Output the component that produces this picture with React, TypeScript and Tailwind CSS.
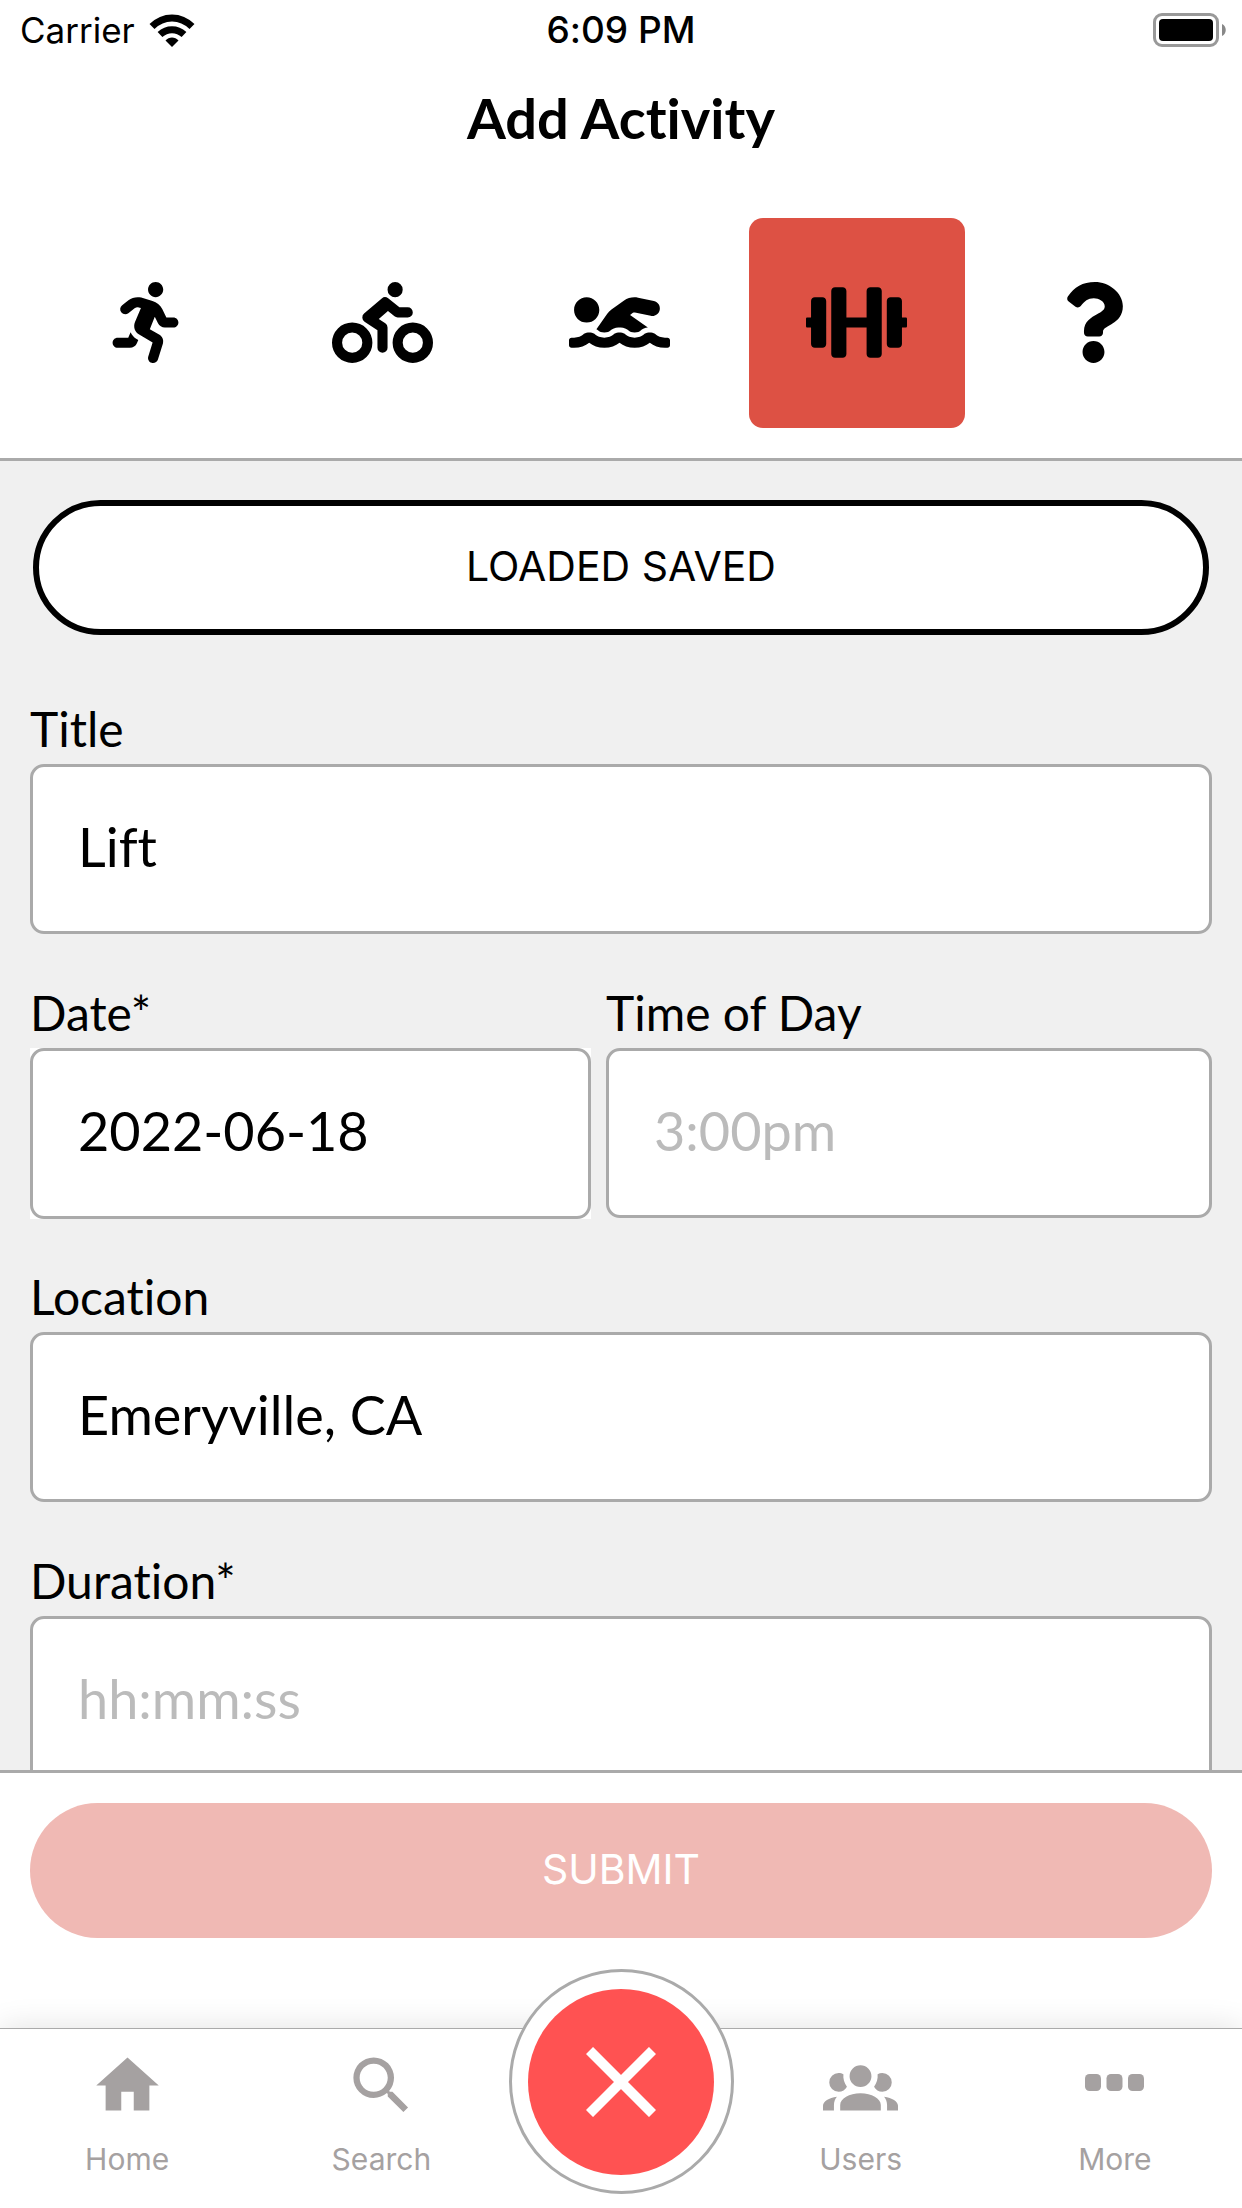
import type { ReactNode } from "react";
import { FaRunning, FaBiking, FaSwimmer, FaDumbbell, FaQuestion } from "react-icons/fa";
import { MdHome, MdSearch } from "react-icons/md";

function WifiIcon() {
  return (
    <svg viewBox="0 0 46 33" className="h-[33px] w-[46px]" aria-hidden="true">
      <g fill="none" stroke="#000" strokeWidth="7">
        <path d="M3 12.500C14.500 1 31.500 1 43 12.500" />
        <path d="M11 20.500C18 14 28 14 35 20.500" />
      </g>
      <path d="M16.500 26.500C20 22.500 26 22.500 29.500 26.500L23 33Z" />
    </svg>
  );
}

function BatteryIcon() {
  return (
    <svg viewBox="0 0 73 34" className="h-[34px] w-[73px]" aria-hidden="true">
      <rect x="1.500" y="1.500" width="63" height="31" rx="7.500" fill="none" stroke="#999" strokeWidth="3" />
      <rect x="6" y="6" width="54" height="22" rx="4" />
      <path d="M69 11C74 13 74 21 69 23Z" fill="#888" />
    </svg>
  );
}

function GroupIcon() {
  return (
    <svg viewBox="0 0 24 24" className="size-[75px]" fill="currentColor" aria-hidden="true">
      <path d="M12,5.5A3.5,3.5 0 0,1 15.5,9A3.5,3.5 0 0,1 12,12.5A3.5,3.5 0 0,1 8.5,9A3.5,3.5 0 0,1 12,5.5M5,8C5.56,8 6.08,8.15 6.53,8.42C6.38,9.85 6.8,11.27 7.66,12.38C7.16,13.34 6.16,14 5,14A3,3 0 0,1 2,11A3,3 0 0,1 5,8M19,8A3,3 0 0,1 22,11A3,3 0 0,1 19,14C17.84,14 16.84,13.34 16.34,12.38C17.2,11.27 17.62,9.85 17.47,8.42C17.92,8.15 18.44,8 19,8M5.5,18.25C5.5,16.18 8.41,14.5 12,14.5C15.59,14.5 18.5,16.18 18.5,18.25V20H5.5V18.25M0,20V18.5C0,17.11 1.89,15.94 4.45,15.6C3.86,16.28 3.5,17.22 3.5,18.25V20H0M24,20H20.5V18.25C20.5,17.22 20.14,16.28 19.55,15.6C22.11,15.94 24,17.11 24,18.5V20Z" />
    </svg>
  );
}

function MoreIcon() {
  return (
    <svg viewBox="0 0 75 75" className="size-[75px]" fill="currentColor" aria-hidden="true">
      <rect x="8" y="26" width="16" height="17" rx="4.500" />
      <rect x="29.500" y="26" width="16" height="17" rx="4.500" />
      <rect x="51" y="26" width="16" height="17" rx="4.500" />
    </svg>
  );
}

const activities = [
  { name: "Run", icon: FaRunning, active: false },
  { name: "Bike", icon: FaBiking, active: false },
  { name: "Swim", icon: FaSwimmer, active: false },
  { name: "Lift", icon: FaDumbbell, active: true },
  { name: "Other", icon: FaQuestion, active: false },
];

type FieldProps = {
  id: string;
  label: string;
  value?: string;
  placeholder?: string;
  className?: string;
  boxClassName?: string;
};

function Field({ id, label, value, placeholder, className = "", boxClassName = "h-[170px]" }: FieldProps) {
  return (
    <div className={`flex min-w-0 flex-col ${className}`}>
      <label htmlFor={id} className="h-[68px] text-[48px] leading-[66px]">
        {label}
      </label>
      <div className={boxClassName}>
        <input
          id={id}
          type="text"
          defaultValue={value}
          placeholder={placeholder}
          className="block h-full w-full rounded-[14px] border-3 border-[#aaa] bg-white px-[45px] pb-1.5 text-[54px] text-black outline-none placeholder:text-[#bbb]"
        />
      </div>
    </div>
  );
}

function Tab({ label, children }: { label: string; children: ReactNode }) {
  return (
    <a href="#" className="flex flex-1 flex-col items-center pt-[19px] text-[#a5a1a1]">
      {children}
      <span className="mt-[18px] font-[Inter,sans-serif] text-[30px] leading-[36px]">{label}</span>
    </a>
  );
}

export default function App() {
  return (
    <div className="flex h-screen flex-col overflow-hidden bg-white font-[Lato,sans-serif] text-black [font-variant-ligatures:none]">
      <header className="border-b-3 border-[#aaa]">
        <div className="grid h-[60px] grid-cols-3 items-center pr-4 pl-5 font-[Inter,sans-serif]">
          <div className="flex items-center gap-3.5 text-[35px]">
            <span>Carrier</span>
            <WifiIcon />
          </div>
          <span className="pr-1 text-center text-[37px] font-medium">6:09 PM</span>
          <div className="flex justify-end">
            <BatteryIcon />
          </div>
        </div>
        <h1 className="h-[158px] pt-[22px] text-center text-[56px] leading-[72px] font-bold">Add Activity</h1>
        <div className="grid grid-cols-5 gap-[21px] pr-10 pb-[30px] pl-[38px]">
          {activities.map(({ name, icon: Icon, active }) => (
            <button
              key={name}
              type="button"
              aria-label={name}
              aria-pressed={active}
              className={`flex h-[210px] items-center justify-center rounded-[14px] pr-0.5 pb-0.5 ${active ? "bg-[#dd5144]" : "bg-white"}`}
            >
              <Icon className="h-[81px] w-[101px]" />
            </button>
          ))}
        </div>
      </header>

      <main className="min-h-0 flex-1 overflow-hidden bg-[#f0f0f0] px-[30px] pt-[39px]">
        <div className="px-[3px]">
          <button
            type="button"
            className="h-[135px] w-full rounded-full border-6 border-black bg-white pb-0.5 font-[Inter,sans-serif] text-[41px]"
          >
            LOADED SAVED
          </button>
        </div>
        <form className="flex flex-col gap-[46px] pt-[61px]">
          <Field id="title" label="Title" value="Lift" />
          <div className="-mb-px flex gap-[15px]">
            <Field id="date" label="Date*" value="2022-06-18" className="w-[561px]" boxClassName="h-[171px] bg-white" />
            <Field id="time" label="Time of Day" placeholder="3:00pm" className="flex-1" />
          </div>
          <Field id="location" label="Location" value="Emeryville, CA" />
          <Field id="duration" label="Duration*" placeholder="hh:mm:ss" />
        </form>
      </main>

      <div className="border-t-3 border-[#aaa] bg-white px-[30px] pt-[30px] pb-[90px]">
        <button
          type="button"
          className="h-[135px] w-full rounded-full bg-[#f0b9b4] pb-0.5 font-[Inter,sans-serif] text-[41px] text-white"
        >
          SUBMIT
        </button>
      </div>

      <nav className="flex h-[180px] border-t border-[#aaa] bg-white shadow-[0_0_30px_rgba(0,0,0,0.12)]">
        <Tab label="Home">
          <MdHome className="size-[75px]" />
        </Tab>
        <Tab label="Search">
          <MdSearch className="size-[75px]" />
        </Tab>
        <button
          type="button"
          aria-label="Close"
          className="-mt-[60px] flex size-[225px] items-center justify-center rounded-full border-3 border-[#aaa] bg-white"
        >
          <span className="flex size-[186px] items-center justify-center rounded-full bg-[#ff5252]">
            <svg viewBox="0 0 70 70" className="size-[70px]" stroke="#fff" strokeWidth="10" aria-hidden="true">
              <path d="M3.500 3.500L66.500 66.500M66.500 3.500L3.500 66.500" />
            </svg>
          </span>
        </button>
        <Tab label="Users">
          <GroupIcon />
        </Tab>
        <Tab label="More">
          <MoreIcon />
        </Tab>
      </nav>
    </div>
  );
}
